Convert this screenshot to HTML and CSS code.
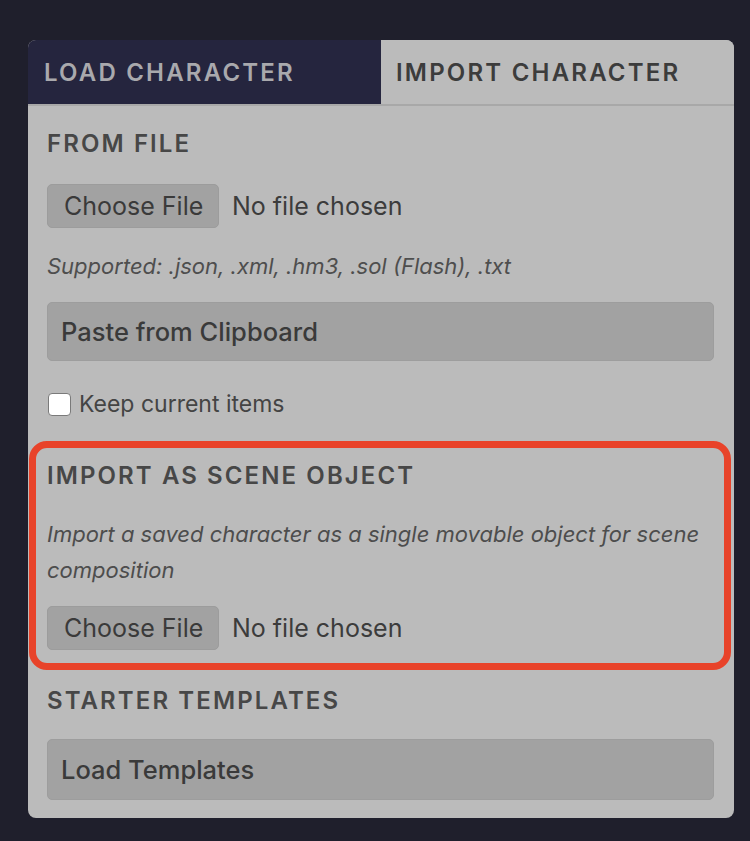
FILE: index.html
```html
<!DOCTYPE html>
<html lang="en">
<head>
<meta charset="utf-8">
<title>Import Character</title>
<link rel="stylesheet" href="styles.css">
</head>
<body>
<div class="panel">
  <div class="tabs">
    <div class="tab tab-inactive">LOAD CHARACTER</div>
    <div class="tab tab-active">IMPORT CHARACTER</div>
  </div>
  <div class="body">
    <h3 class="heading h-from">FROM FILE</h3>
    <div class="file-row fr-1">
      <span class="file-btn">Choose File</span>
      <span class="file-name">No file chosen</span>
    </div>
    <p class="hint">Supported: .json, .xml, .hm3, .sol (Flash), .txt</p>
    <button class="wide-btn wb-paste">Paste from Clipboard</button>
    <label class="check-row">
      <input type="checkbox" class="check">
      <span>Keep current items</span>
    </label>
    <section class="highlight">
      <h3 class="heading">IMPORT AS SCENE OBJECT</h3>
      <p class="desc">Import a saved character as a single movable object for scene composition</p>
      <div class="file-row fr-2">
        <span class="file-btn">Choose File</span>
        <span class="file-name">No file chosen</span>
      </div>
    </section>
    <h3 class="heading h-starter">STARTER TEMPLATES</h3>
    <button class="wide-btn wb-load">Load Templates</button>
  </div>
</div>
</body>
</html>
```

FILE: styles.css
```css
html, body {
  margin: 0;
  padding: 0;
}
body {
  background: #1f1f2c;
  font-family: Inter, "Liberation Sans", sans-serif;
  color: #444;
  width: 750px;
  height: 841px;
  overflow: hidden;
}
.panel {
  margin: 40px 0 0 28px;
  width: 706px;
  background: #bbbbbb;
  border-radius: 8px;
  overflow: hidden;
}
.tabs {
  display: grid;
  grid-template-columns: 353px 353px;
  height: 64px;
  border-bottom: 2px solid #a8a8a8;
}
.tab {
  display: flex;
  align-items: center;
  padding-left: 16px;
  font-size: 24px;
  font-weight: 600;
  letter-spacing: 2.2px;
}
.tab-inactive {
  background: #25253e;
  color: #a9a9ad;
}
.tab-active {
  background: #bbbbbb;
  color: #3c3c3c;
  padding-left: 15px;
}
.body {
  display: flex;
  flex-direction: column;
  padding: 0 20px 18px 19px;
}
.heading {
  margin: 0;
  font-size: 24px;
  line-height: 28px;
  font-weight: 600;
  letter-spacing: 2.1px;
  color: #474747;
}
.h-from {
  margin-top: 24px;
}
.file-row {
  display: flex;
  align-items: center;
  gap: 13px;
}
.fr-1 {
  margin-top: 26px;
}
.file-btn {
  box-sizing: border-box;
  width: 172px;
  height: 44px;
  display: flex;
  align-items: center;
  padding-left: 16px;
  background: #a2a2a2;
  border: 1px solid #9c9c9c;
  border-radius: 5px;
  font-size: 25px;
  color: #3a3a3a;
}
.file-name {
  font-size: 25px;
  color: #3c3c3c;
}
.hint {
  margin: 25px 0 0;
  font-size: 22px;
  line-height: 26px;
  font-style: italic;
  color: #4e4e4e;
}
.wide-btn {
  box-sizing: border-box;
  width: 100%;
  text-align: left;
  padding: 0 0 0 13px;
  background: #a2a2a2;
  border: 1px solid #9d9d9d;
  border-radius: 5px;
  font-family: Inter, "Liberation Sans", sans-serif;
  font-size: 25.5px;
  font-weight: 500;
  color: #3a3a3a;
}
.wb-paste {
  margin-top: 23px;
  height: 59px;
}
.check-row {
  margin-top: 32px;
  display: flex;
  align-items: center;
  gap: 8px;
  height: 22px;
  font-size: 23px;
  color: #444;
}
.check {
  appearance: none;
  -webkit-appearance: none;
  margin: 0 0 0 1px;
  box-sizing: border-box;
  width: 23px;
  height: 23px;
  background: #fff;
  border: 1.5px solid #7a7a7a;
  border-radius: 4px;
}
.highlight {
  margin: 26px -17px 0 -18px;
  padding: 14px 10px 13px 11px;
  border: 7px solid #e8432a;
  border-radius: 18px;
}
.desc {
  margin: 26px 0 0;
  font-size: 22px;
  line-height: 36px;
  font-style: italic;
  color: #4d4d4d;
}
.fr-2 {
  margin-top: 18px;
}
.h-starter {
  margin-top: 17px;
}
.wb-load {
  margin-top: 24px;
  height: 61px;
}
```
